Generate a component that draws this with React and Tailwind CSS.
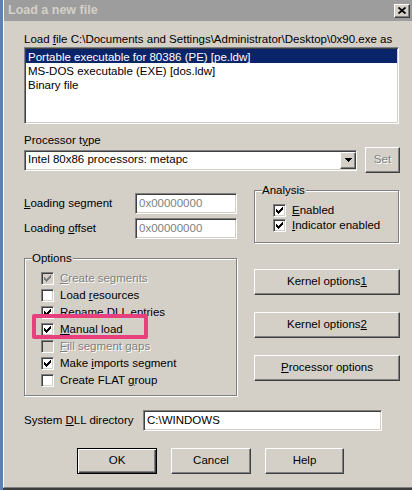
import React from 'react';

// classic 7x7 check glyph, one rect per pixel
const CHECK_PIXELS = [
  [6, 0], [5, 1], [6, 1], [0, 2], [4, 2], [5, 2], [6, 2],
  [0, 3], [1, 3], [3, 3], [4, 3], [5, 3],
  [0, 4], [1, 4], [2, 4], [3, 4], [4, 4],
  [1, 5], [2, 5], [3, 5], [2, 6],
];

const sunken =
  'border border-t-[#808080] border-l-[#808080] border-r-white border-b-white shadow-[inset_1px_1px_0_#404040,inset_-1px_-1px_0_#d4d0c8]';
const raised =
  'border border-t-white border-l-white border-r-[#404040] border-b-[#404040] shadow-[inset_-1px_-1px_0_#808080,inset_1px_1px_0_#d4d0c8]';
const disabledText = 'text-[#808080] [text-shadow:1px_1px_0_#fff]';

const CheckMark = ({ color = '#000' }) => (
  <svg width="7" height="7" viewBox="0 0 7 7" shapeRendering="crispEdges">
    {CHECK_PIXELS.map(([x, y]) => (
      <rect key={`${x}-${y}`} x={x} y={y} width="1" height="1" fill={color} />
    ))}
  </svg>
);

const Checkbox = ({ checked, disabled }) => (
  <span
    className={`flex h-[13px] w-[13px] shrink-0 items-center justify-center ${sunken} ${
      disabled ? 'bg-[#d4d0c8]' : 'bg-white'
    }`}
  >
    {checked && <CheckMark color={disabled ? '#808080' : '#000'} />}
  </span>
);

const Key = ({ children }) => <span className="underline underline-offset-[1px]">{children}</span>;

const CheckRow = ({ checked, disabled, height = 'h-[17px]', children }) => (
  <div className={`flex ${height} items-center gap-[6px] whitespace-nowrap`}>
    <Checkbox checked={checked} disabled={disabled} />
    <span className={disabled ? disabledText : ''}>{children}</span>
  </div>
);

const GroupBox = ({ title, className, children }) => (
  <div className={`relative border border-[#808080] shadow-[1px_1px_0_#fff,inset_1px_1px_0_#fff] ${className}`}>
    <span className="absolute left-[7px] top-[-8px] bg-[#d4d0c8] pr-[1px] leading-[14px]">{title}</span>
    {children}
  </div>
);

const Button = ({ children, className = '', disabled, isDefault }) => (
  <button
    className={`flex h-[26px] items-center justify-center ${
      isDefault
        ? 'border border-black shadow-[inset_1px_1px_0_#fff,inset_-1px_-1px_0_#404040,inset_-2px_-2px_0_#808080]'
        : raised
    } ${disabled ? disabledText : ''} ${className}`}
  >
    {children}
  </button>
);

const TextBox = ({ value, className = '', muted }) => (
  <div className={`flex h-[21px] items-center bg-white pl-[3px] ${sunken} ${muted ? 'text-[#808080]' : ''} ${className}`}>
    {value}
  </div>
);

export default function App() {
  const formats = [
    'Portable executable for 80386 (PE) [pe.ldw]',
    'MS-DOS executable (EXE) [dos.ldw]',
    'Binary file',
  ];

  return (
    <div className="flex h-[490px] w-[412px] overflow-hidden bg-[#3c3c3c] font-['Liberation_Sans',Arial,sans-serif] text-[11.5px] text-black">
      <div className="h-full w-[3px] bg-[#5b82b8]" />
      <div className="flex h-[488px] flex-1 flex-col border-b border-l border-b-[#808080] border-l-white bg-[#d4d0c8]">
        {/* Title bar */}
        <div className="flex h-[21px] shrink-0 items-center justify-between bg-[#9d9d9d] pl-[4px] pr-[2px]">
          <span className="text-[12.5px] font-bold text-[#d4d0c8]">Load a new file</span>
          <span className={`flex h-[14px] w-[16px] items-center justify-center bg-[#d4d0c8] ${raised}`}>
            <svg width="8" height="7" viewBox="0 0 8 7">
              <path d="M0.5 0.5 L7.5 6.5 M7.5 0.5 L0.5 6.5" stroke="#000" strokeWidth="1.8" />
            </svg>
          </span>
        </div>

        <div className="flex flex-col pl-[20px]">
          <div className="mt-[12px] h-[13px] whitespace-nowrap leading-[13px]">
            Load <Key>f</Key>ile C:\Documents and Settings\Administrator\Desktop\0x90.exe as
          </div>

          <div className={`mt-[1px] h-[77px] w-[375px] bg-white p-[1px] ${sunken}`}>
            {formats.map((f, i) => (
              <div
                key={f}
                className={`h-[14px] whitespace-nowrap px-[2px] leading-[16px] ${
                  i === 0 ? 'bg-[#0a246a] text-white' : ''
                }`}
              >
                {f}
              </div>
            ))}
          </div>

          <div className="mt-[10px] h-[13px] leading-[13px]">
            Processor t<Key>y</Key>pe
          </div>

          <div className="flex h-[26px] items-center">
            <div className={`flex h-[21px] w-[333px] items-center bg-white pl-[3px] ${sunken}`}>
              <span>Intel 80x86 processors: metapc</span>
              <span className={`ml-auto flex h-[17px] w-[16px] items-center justify-center bg-[#d4d0c8] ${raised}`}>
                <svg width="7" height="4" viewBox="0 0 7 4" shapeRendering="crispEdges">
                  <path d="M0 0 H7 V1 H6 V2 H5 V3 H4 V4 H3 V3 H2 V2 H1 V1 H0 Z" fill="#000" />
                </svg>
              </span>
            </div>
            <Button disabled className="ml-[8px] w-[35px]">
              Set
            </Button>
          </div>

          {/* Loading + Analysis */}
          <div className="mt-[17px] flex">
            <div className="flex w-[213px] flex-col">
              <div className="mt-[3px] flex items-center">
                <span className="w-[111px]">
                  <Key>L</Key>oading segment
                </span>
                <TextBox value="0x00000000" muted className="w-[102px]" />
              </div>
              <div className="mt-[4px] flex items-center">
                <span className="w-[111px]">
                  Loading <Key>o</Key>ffset
                </span>
                <TextBox value="0x00000000" muted className="w-[102px]" />
              </div>
            </div>
            <GroupBox title="Analysis" className="ml-[17px] h-[53px] w-[145px] pl-[18px] pt-[12px]">
              <CheckRow checked height="h-[15px]">
                <Key>E</Key>nabled
              </CheckRow>
              <CheckRow checked height="h-[15px]">
                <Key>I</Key>ndicator enabled
              </CheckRow>
            </GroupBox>
          </div>

          {/* Options + kernel buttons */}
          <div className="mt-[15px] flex">
            <GroupBox title="Options" className="h-[138px] w-[213px] pl-[16px] pt-[11px]">
              <CheckRow checked disabled>
                <Key>C</Key>reate segments
              </CheckRow>
              <CheckRow>
                Load <Key>r</Key>esources
              </CheckRow>
              <CheckRow checked>
                Rename <Key>D</Key>LL entries
              </CheckRow>
              <CheckRow checked>
                <Key>M</Key>anual load
              </CheckRow>
              <CheckRow disabled>
                <Key>F</Key>ill segment gaps
              </CheckRow>
              <CheckRow checked>
                Make <Key>i</Key>mports segment
              </CheckRow>
              <CheckRow>
                Create FLAT <Key>g</Key>roup
              </CheckRow>
              <div className="absolute left-[7px] top-[55px] h-[25px] w-[116px] rounded-[2px] border-[4px] border-[#e8407c]" />
            </GroupBox>
            <div className="ml-[17px] mt-[11px] flex flex-col gap-[17px]">
              <Button className="w-[146px]">
                Kernel options<Key>1</Key>
              </Button>
              <Button className="w-[146px]">
                Kernel options<Key>2</Key>
              </Button>
              <Button className="w-[146px]">
                <Key>P</Key>rocessor options
              </Button>
            </div>
          </div>

          <div className="mt-[14px] flex h-[21px] items-center">
            <span className="w-[119px] whitespace-nowrap">
              System <Key>D</Key>LL directory
            </span>
            <TextBox value="C:\WINDOWS" className="w-[239px]" />
          </div>

          <div className="mt-[17px] flex gap-[14px] pl-[53px]">
            <Button isDefault className="w-[80px]">
              OK
            </Button>
            <Button className="w-[80px]">Cancel</Button>
            <Button className="w-[79px]">Help</Button>
          </div>
        </div>
      </div>
    </div>
  );
}
